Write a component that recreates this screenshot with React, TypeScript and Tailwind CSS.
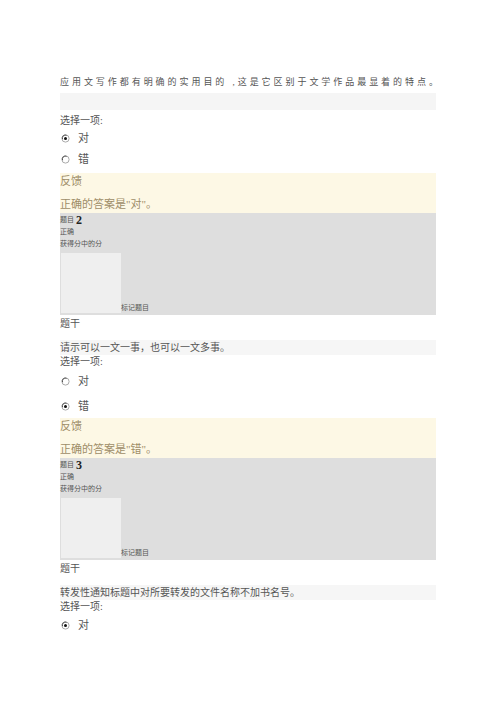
const FONT = "font-['Liberation_Serif','Noto_Sans_CJK_SC',serif]";

function Radio({ checked }: { checked: boolean }) {
  return (
    <svg width="9" height="9" viewBox="0 0 9 9" className="shrink-0">
      <circle cx="4.5" cy="4.5" r="3.6" fill="#fff" stroke="#a0a0a0" strokeWidth="0.9" />
      <path d="M1.6 5.2 A3 3 0 0 1 5.6 1.3" fill="none" stroke="#444" strokeWidth="0.9" />
      {checked && <circle cx="4.5" cy="4.5" r="1.5" fill="#111" />}
    </svg>
  );
}

function Option({ label, checked, h }: { label: string; checked: boolean; h: string }) {
  return (
    <div className={`flex items-center gap-[8px] pl-[1px] ${h}`}>
      <Radio checked={checked} />
      <span className="text-[11px] text-[#555]">{label}</span>
    </div>
  );
}

function Feedback({ answer }: { answer: string }) {
  return (
    <div className="bg-[#fdf8e5] h-[40px] flex flex-col text-[11px] text-[#9d8d68] leading-none">
      <div className="h-[16px] flex items-center pt-[1px]">反馈</div>
      <div className="h-[24px] flex items-end pb-[3px]">正确的答案是"{answer}"。</div>
    </div>
  );
}

function Info({ n }: { n: number }) {
  return (
    <div className="bg-[#dedede] h-[102px] flex flex-col text-[7px] text-[#555] leading-none pt-[1px]">
      <div className="h-[12px] flex items-center gap-[2px]">
        <span>题目</span>
        <span className="text-[12px] font-bold text-[#222]">{n}</span>
      </div>
      <div className="h-[12px] flex items-center">正确</div>
      <div className="h-[12px] flex items-center">获得分中的分</div>
      <div className="flex items-end mt-[3px]">
        <div className="w-[60px] h-[60px] bg-[#efefef] ml-[1px]" />
        <span className="pb-[1px]">标记题目</span>
      </div>
    </div>
  );
}

export default function App() {
  return (
    <div className={`min-h-[702px] bg-white ${FONT}`}>
      <div className="w-[376px] ml-[60px] pt-[73px]">
        {/* Q1 */}
        <div className="h-[20px] flex items-center text-[9px] tracking-[2.95px] text-[#555] whitespace-nowrap">
          应用文写作都有明确的实用目的 ,这是它区别于文学作品最显着的特点。
        </div>
        <div className="h-[17px] bg-[#f5f5f5]" />
        <div className="h-[20px] flex items-center text-[10px] text-[#555]">选择一项:</div>
        <Option label="对" checked h="h-[16px]" />
        <Option label="错" checked={false} h="h-[27px]" />
        <Feedback answer="对" />
        <Info n={2} />

        {/* Q2 */}
        <div className="h-[16px] flex items-center text-[10px] text-[#555]">题干</div>
        <div className="h-[9px]" />
        <div className="h-[15px] flex items-center bg-[#f6f6f6] text-[10px] text-[#555]">
          请示可以一文一事，也可以一文多事。
        </div>
        <div className="h-[12px] flex items-center text-[10px] text-[#555]">选择一项:</div>
        <Option label="对" checked={false} h="h-[28px]" />
        <Option label="错" checked h="h-[23px]" />
        <Feedback answer="错" />
        <Info n={3} />

        {/* Q3 */}
        <div className="h-[16px] flex items-center text-[10px] text-[#555]">题干</div>
        <div className="h-[9px]" />
        <div className="h-[15px] flex items-center bg-[#f6f6f6] text-[10px] text-[#555]">
          转发性通知标题中对所要转发的文件名称不加书名号。
        </div>
        <div className="h-[12px] flex items-center text-[10px] text-[#555]">选择一项:</div>
        <Option label="对" checked h="h-[26px]" />
      </div>
    </div>
  );
}
